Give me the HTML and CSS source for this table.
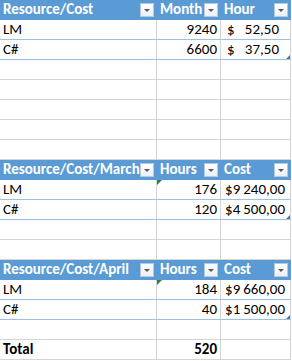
FILE: index.html
```html
<!DOCTYPE html>
<html>
<head>
<meta charset="utf-8">
<link rel="stylesheet" href="styles.css">
</head>
<body>
<div class="sheet">
  <div class="row head">
    <div class="cell a"><span class="t">Resource/Cost</span><span class="dd"></span></div>
    <div class="cell b"><span class="t">Month</span><span class="dd"></span></div>
    <div class="cell c"><span class="t">Hour</span><span class="dd"></span></div>
  </div>
  <div class="row tb">
    <div class="cell a">LM</div>
    <div class="cell b num">9240</div>
    <div class="cell c acc"><span>$</span><span>52,50</span></div>
  </div>
  <div class="row tb">
    <div class="cell a">C#</div>
    <div class="cell b num">6600</div>
    <div class="cell c acc last"><span>$</span><span>37,50</span></div>
  </div>
  <div class="row"><div class="cell a"></div><div class="cell b"></div><div class="cell c"></div></div>
  <div class="row"><div class="cell a"></div><div class="cell b"></div><div class="cell c"></div></div>
  <div class="row"><div class="cell a"></div><div class="cell b"></div><div class="cell c"></div></div>
  <div class="row"><div class="cell a"></div><div class="cell b"></div><div class="cell c"></div></div>
  <div class="row"><div class="cell a"></div><div class="cell b"></div><div class="cell c"></div></div>

  <div class="row head">
    <div class="cell a"><span class="t">Resource/Cost/March</span><span class="dd"></span></div>
    <div class="cell b"><span class="t">Hours</span><span class="dd"></span></div>
    <div class="cell c"><span class="t">Cost</span><span class="dd"></span></div>
  </div>
  <div class="row tb">
    <div class="cell a">LM</div>
    <div class="cell b num flag">176</div>
    <div class="cell c num">$9&#8201;240,00</div>
  </div>
  <div class="row tb">
    <div class="cell a">C#</div>
    <div class="cell b num">120</div>
    <div class="cell c num last">$4&#8201;500,00</div>
  </div>
  <div class="row"><div class="cell a"></div><div class="cell b"></div><div class="cell c"></div></div>
  <div class="row"><div class="cell a"></div><div class="cell b"></div><div class="cell c"></div></div>

  <div class="row head">
    <div class="cell a"><span class="t">Resource/Cost/April</span><span class="dd"></span></div>
    <div class="cell b"><span class="t">Hours</span><span class="dd"></span></div>
    <div class="cell c"><span class="t">Cost</span><span class="dd"></span></div>
  </div>
  <div class="row tb">
    <div class="cell a">LM</div>
    <div class="cell b num flag">184</div>
    <div class="cell c num">$9&#8201;660,00</div>
  </div>
  <div class="row tb">
    <div class="cell a">C#</div>
    <div class="cell b num">40</div>
    <div class="cell c num last">$1&#8201;500,00</div>
  </div>
  <div class="row"><div class="cell a"></div><div class="cell b"></div><div class="cell c"></div></div>
  <div class="row total">
    <div class="cell a">Total</div>
    <div class="cell b num">520</div>
    <div class="cell c"></div>
  </div>
</div>
</body>
</html>
```
FILE: styles.css
```css
html, body {
  margin: 0;
  padding: 0;
  background: #ffffff;
}
.sheet {
  width: 292px;
  font-family: Carlito, Lato, "Liberation Sans", sans-serif;
  font-size: 15px;
  color: #000000;
}
.row {
  display: grid;
  grid-template-columns: 157px 64px 70px;
  height: 20px;
}
.cell {
  position: relative;
  box-sizing: border-box;
  height: 20px;
  border-right: 1px solid #d4d4d4;
  border-bottom: 1px solid #d4d4d4;
  padding: 0 3px;
  line-height: 19px;
  white-space: nowrap;
  display: flex;
  align-items: center;
}
.row.tb .cell {
  border-bottom-color: #9bc2e6;
}
.row.head .cell {
  background: #5b9bd5;
  border-color: #5b9bd5;
  color: #ffffff;
  font-weight: bold;
  justify-content: space-between;
  padding-right: 2px;
  padding-left: 3px;
}
.dd {
  flex: none;
  width: 14px;
  height: 14px;
  box-sizing: border-box;
  border: 1px solid #b7c9dd;
  background: linear-gradient(#ffffff, #eceff3);
  position: relative;
}
.dd::after {
  content: "";
  position: absolute;
  left: 3px;
  top: 5px;
  border-left: 3.5px solid transparent;
  border-right: 3.5px solid transparent;
  border-top: 3.5px solid #595959;
}
.num {
  justify-content: flex-end;
}
.acc {
  justify-content: space-between;
  padding-left: 6px;
  padding-right: 11px;
}
.row .cell.c.num {
  padding-right: 5px;
}
.flag::before {
  content: "";
  position: absolute;
  left: 0;
  top: 0;
  border-top: 5px solid #1e8a3c;
  border-right: 5px solid transparent;
}
.last::after {
  content: "";
  position: absolute;
  right: 0;
  bottom: 0;
  border-bottom: 4px solid #4472c4;
  border-left: 4px solid transparent;
}
.total .cell {
  font-weight: bold;
}
```
